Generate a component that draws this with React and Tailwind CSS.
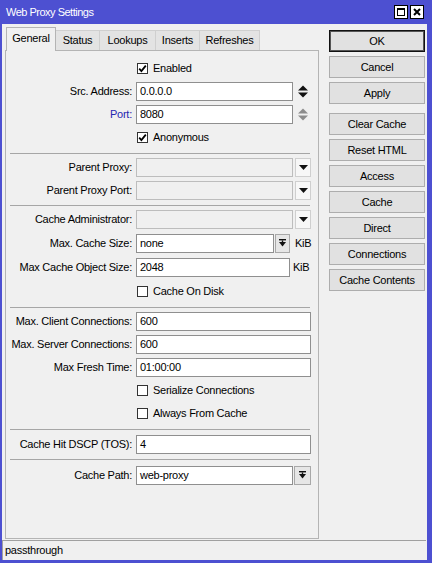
import React from "react";

const FONT = "font-['Liberation_Sans',Arial,sans-serif]";

function Check({ checked }) {
    return (
        <div className="flex h-[11px] w-[11px] shrink-0 items-center justify-center border border-[#333333] bg-white">
            {checked && (
                <svg width="9" height="9" viewBox="0 0 9 9">
                    <polyline points="1.2,4.6 3.4,7 7.8,1.6" fill="none" stroke="#000" strokeWidth="1.8" />
                </svg>
            )}
        </div>
    );
}

function CheckRow({ label, checked }) {
    return (
        <div className="flex h-[20px] items-center pl-[131px]">
            <Check checked={checked} />
            <span className="ml-[5px]">{label}</span>
        </div>
    );
}

function Row({ label, blue, children }) {
    return (
        <div className="flex h-[20px] items-center">
            <div className={`w-[126px] shrink-0 text-right ${blue ? "text-[#2626b0]" : "text-black"}`}>{label}:</div>
            <div className="ml-[4px] flex items-center">{children}</div>
        </div>
    );
}

function Field({ value, className = "w-[157px]", disabled }) {
    return (
        <div
            className={`h-[19px] shrink-0 border pl-[3px] leading-[17px] ${className} ${
                disabled ? "border-[#bdbdbd] bg-[#f0f0f0]" : "border-[#8f8f8f] bg-white"
            }`}
        >
            {value}
        </div>
    );
}

function Spinner({ grey }) {
    const c = grey ? "#8c8c8c" : "#111";
    return (
        <svg width="10" height="13" viewBox="0 0 10 13" className="ml-[5px]">
            <polygon points="0,5.5 5,0.5 10,5.5" fill={c} />
            <polygon points="0,7.5 10,7.5 5,12.5" fill={c} />
        </svg>
    );
}

function DropBtn() {
    return (
        <div className="ml-[2px] flex h-[19px] w-[16px] items-center justify-center border border-[#cfcfcf] bg-[#f7f7f7]">
            <svg width="9" height="5" viewBox="0 0 9 5">
                <polygon points="0,0 9,0 4.5,5" fill="#111" />
            </svg>
        </div>
    );
}

function BarBtn({ className = "ml-[1px] w-[15px]" }) {
    return (
        <div className={`flex h-[19px] items-center justify-center border border-[#a8a8a8] bg-[#e6e6e6] ${className}`}>
            <svg width="7" height="8" viewBox="0 0 7 8">
                <rect x="0" y="0" width="7" height="1.4" fill="#111" />
                <polygon points="0,3 7,3 3.5,7.5" fill="#111" />
                <rect x="2.8" y="1.4" width="1.4" height="2" fill="#111" />
            </svg>
        </div>
    );
}

function Sep({ className }) {
    return <div className={`ml-[4px] mr-[8px] h-px bg-[#a6a6a6] ${className}`} />;
}

const buttons = [
    ["Cancel", "mt-[4px]"],
    ["Apply", "mt-[4px]"],
    ["Clear Cache", "mt-[9px]"],
    ["Reset HTML", "mt-[4px]"],
    ["Access", "mt-[4px]"],
    ["Cache", "mt-[4px]"],
    ["Direct", "mt-[4px]"],
    ["Connections", "mt-[4px]"],
    ["Cache Contents", "mt-[4px]"],
];

export default function App() {
    return (
        <div className={`flex h-[563px] w-[432px] flex-col bg-[#4d50d1] text-[11px] tracking-[-0.25px] text-black ${FONT}`}>
            {/* title bar */}
            <div className="flex h-[24px] shrink-0 items-center pl-[6px] pr-[8px]">
                <span className="text-[11px] tracking-[-0.5px] text-white">Web Proxy Settings</span>
                <div className="ml-auto flex gap-[2px]">
                    <div className="flex h-[14px] w-[14px] items-center justify-center border border-black bg-white">
                        <div className="h-[8px] w-[8px] border border-t-2 border-black" />
                    </div>
                    <div className="flex h-[14px] w-[14px] items-center justify-center border border-black bg-white">
                        <svg width="8" height="8" viewBox="0 0 8 8">
                            <path d="M1 1 L7 7 M7 1 L1 7" stroke="#000" strokeWidth="2" />
                        </svg>
                    </div>
                </div>
            </div>

            {/* client */}
            <div className="mb-[3px] ml-[2px] mr-[5px] flex flex-1 flex-col bg-[#f0f0f0]">
                <div className="flex h-[515px]">
                    <div className="ml-[3px] pt-[3px]">
                        <div className="flex h-[23px] items-end pl-[1px]">
                            <div className="relative z-10 -mb-px flex h-[24px] w-[50px] items-center justify-center border border-b-0 border-[#b4b4b4] bg-[#f0f0f0] pb-[2px]">
                                General
                            </div>
                            {[
                                ["Status", "w-[44px]"],
                                ["Lookups", "w-[56px]"],
                                ["Inserts", "w-[44px]"],
                                ["Refreshes", "w-[60px]"],
                            ].map(([t, w]) => (
                                <div
                                    key={t}
                                    className={`flex h-[20px] items-center justify-center border border-b-0 border-l-0 border-[#cfcfcf] bg-[#e3e3e3] ${w}`}
                                >
                                    {t}
                                </div>
                            ))}
                        </div>
                        <div className="h-[489px] w-[314px] border border-[#b4b4b4] bg-[#f0f0f0] pt-[7px]">
                            <div className="flex flex-col gap-[3px]">
                                <CheckRow label="Enabled" checked />
                                <Row label="Src. Address">
                                    <Field value="0.0.0.0" />
                                    <Spinner />
                                </Row>
                                <Row label="Port" blue>
                                    <Field value="8080" />
                                    <Spinner grey />
                                </Row>
                                <CheckRow label="Anonymous" checked />
                            </div>
                            <Sep className="mb-[3px] mt-[6px]" />
                            <div className="flex flex-col gap-[3px]">
                                <Row label="Parent Proxy">
                                    <Field value="" disabled />
                                    <DropBtn />
                                </Row>
                                <Row label="Parent Proxy Port">
                                    <Field value="" disabled />
                                    <DropBtn />
                                </Row>
                            </div>
                            <Sep className="mb-[3px] mt-[5px]" />
                            <div className="flex flex-col gap-[4px]">
                                <Row label="Cache Administrator">
                                    <Field value="" disabled />
                                    <DropBtn />
                                </Row>
                                <Row label="Max. Cache Size">
                                    <Field value="none" className="w-[138px]" />
                                    <BarBtn />
                                    <span className="ml-[5px]">KiB</span>
                                </Row>
                                <Row label="Max Cache Object Size">
                                    <Field value="2048" className="w-[154px]" />
                                    <span className="ml-[3px]">KiB</span>
                                </Row>
                                <CheckRow label="Cache On Disk" />
                            </div>
                            <Sep className="mb-[3px] mt-[6px]" />
                            <div className="flex flex-col gap-[3px]">
                                <Row label="Max. Client Connections">
                                    <Field value="600" className="w-[175px]" />
                                </Row>
                                <Row label="Max. Server Connections">
                                    <Field value="600" className="w-[175px]" />
                                </Row>
                                <Row label="Max Fresh Time">
                                    <Field value="01:00:00" className="w-[175px]" />
                                </Row>
                                <CheckRow label="Serialize Connections" />
                                <CheckRow label="Always From Cache" />
                            </div>
                            <Sep className="mb-[4px] mt-[6px]" />
                            <Row label="Cache Hit DSCP (TOS)">
                                <Field value="4" className="w-[175px]" />
                            </Row>
                            <Sep className="mb-[5px] mt-[5px]" />
                            <Row label="Cache Path">
                                <Field value="web-proxy" />
                                <BarBtn className="ml-[1px] w-[17px]" />
                            </Row>
                        </div>
                    </div>

                    {/* buttons */}
                    <div className="ml-[10px] flex w-[96px] flex-col pt-[6px]">
                        <div className="flex h-[22px] items-center justify-center border border-[#111] bg-[#e1e1e1] shadow-[inset_0_0_0_1px_#555]">
                            OK
                        </div>
                        {buttons.map(([t, m]) => (
                            <div
                                key={t}
                                className={`flex h-[22px] items-center justify-center border border-[#adadad] bg-[#e1e1e1] ${m}`}
                            >
                                {t}
                            </div>
                        ))}
                    </div>
                </div>

                {/* status bar */}
                <div className="mr-[1px] mt-[1px] flex h-[20px] items-center border-l border-t border-[#a0a0a0] pl-[2px]">
                    passthrough
                </div>
            </div>
        </div>
    );
}
